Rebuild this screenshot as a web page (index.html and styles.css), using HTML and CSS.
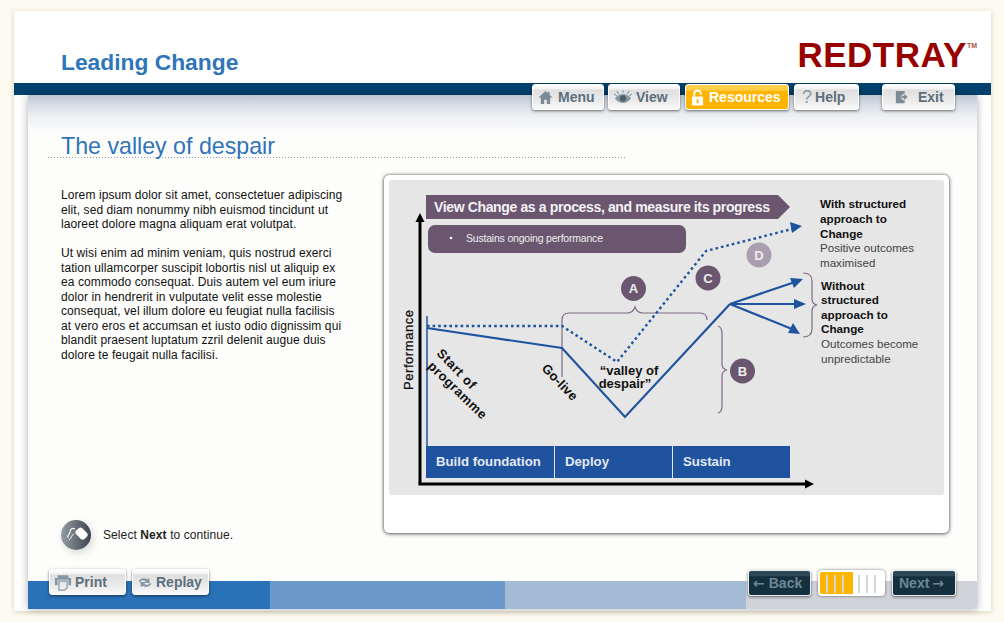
FILE: index.html
```html
<!DOCTYPE html>
<html lang="en">
<head>
<meta charset="utf-8">
<title>Leading Change</title>
<link rel="stylesheet" href="styles.css">
</head>
<body>
<div class="shell">
  <header class="top">
    <h1 class="course">Leading Change</h1>
    <div class="logo">REDTRAY<span class="tm">TM</span></div>
  </header>
  <div class="navband">
    <nav class="nav">
      <a class="btn w-menu"><svg class="ic" viewBox="0 0 16 16"><path d="M8 1 0.5 8H3v7h3.6v-4.500h2.800V15H13V8h2.500L12.500 5.200V2h-2v1.300z" fill="#7c8b96"/></svg>Menu</a>
      <a class="btn w-view"><svg class="ic ic-eye" viewBox="0 0 20 16"><path d="M1 9c3-4 6-5 9-5s6 1 9 5c-3 3.500-6 5-9 5S4 12.500 1 9z" fill="#8a98a2"/><circle cx="10" cy="9" r="3.400" fill="#4f5d68"/><path d="M3 1l2.500 3M10 0v3M17 1l-2.500 3M0 4l3 2M20 4l-3 2" stroke="#8a98a2" stroke-width="1.200"/></svg>View</a>
      <a class="btn btn-gold w-res"><svg class="ic ic-lock" viewBox="0 0 14 18"><path d="M3.500 8V5a3.500 3.500 0 0 1 7 0v1" fill="none" stroke="#fff" stroke-width="2"/><rect x="1" y="8" width="12" height="9.500" rx="1" fill="#fff"/><rect x="6" y="11" width="2" height="4" fill="#ffb400"/></svg>Resources</a>
      <a class="btn w-help"><span class="q">?</span>Help</a>
      <a class="btn w-exit"><svg class="ic ic-exit" viewBox="0 0 16 16"><path d="M1 1h10v4H8v6h3v4H1z" fill="#7c8b96"/><path d="M15 8 10 4v2.500H7v3h3V12z" fill="#7c8b96" stroke="#eee" stroke-width=".6"/></svg>Exit</a>
    </nav>
  </div>
  <main class="panel">
    <div class="titlebar"><h2 class="title">The valley of despair</h2></div>
    <div class="body">
      <section class="copy">
        <div class="paras">
          <p>Lorem ipsum dolor sit amet, consectetuer adipiscing elit, sed diam nonummy nibh euismod tincidunt ut laoreet dolore magna aliquam erat volutpat.</p>
          <p>Ut wisi enim ad minim veniam, quis nostrud exerci tation ullamcorper suscipit lobortis nisl ut aliquip ex ea commodo consequat. Duis autem vel eum iriure dolor in hendrerit in vulputate velit esse molestie consequat, vel illum dolore eu feugiat nulla facilisis at vero eros et accumsan et iusto odio dignissim qui blandit praesent luptatum zzril delenit augue duis dolore te feugait nulla facilisi.</p>
        </div>
        <div class="prompt">
          <span class="mouse"><svg viewBox="0 0 30 30" width="30" height="30"><path d="M15 10.500l3-2.500c1-.8 2-.8 3 0l5 5c1 1.200 1 2.500 0 3.600l-2.500 2.500c-1.200 1-2.400 1-3.600 0l-5-5c-.8-1-.8-2.400.1-3.600z" fill="#fff"/><path d="M7 18c-1-3 1.500-3 2-6s2-4.500 5-3" fill="none" stroke="#fff" stroke-width="1.200"/><path d="M8 20c3-2 2-5 5-6" fill="none" stroke="#fff" stroke-width="1"/></svg></span>
          <span>Select <b>Next</b> to continue.</span>
        </div>
      </section>
      <figure class="card">
        <svg class="chart" viewBox="384 175 565 358" width="565" height="358">
          <rect x="389" y="180" width="555" height="315" rx="3" class="plot"/>
          <polygon points="426,195 778,195 790,207 778,219 426,219" class="plum"/>
          <text x="434" y="212" class="t-head" textLength="336">View Change as a process, and measure its progress</text>
          <rect x="428" y="225" width="258" height="28" rx="7" class="plum"/>
          <circle cx="451" cy="238" r="1.300" fill="#fff"/>
          <text x="466" y="242" class="t-sub" textLength="137">Sustains ongoing performance</text>

          <path d="M562 377V320q0-7 7-7h58q6 0 8-6q2 6 8 6h57q7 0 7 7" class="brace"/>
          <path d="M718 326q4 1 4 8v30q0 5 5 6q-5 1-5 6v30q0 6-4 7" class="brace"/>
          <path d="M803 273q9 0 9 8v18q0 5 5 6q-5 1-5 6v18q0 8-9 8" class="brace"/>

          <path d="M427 316V446" class="line thin"/>
          <path d="M427 328 562 348 625 417 730 304" class="line"/>
          <path d="M427 326H562L617 362 706 251 792 229" class="dots"/>
          <polygon points="802,226 790,222 792,233" class="blue"/>
          <path d="M730 304 795 282M730 304H796M730 304 792 329" class="line"/>
          <polygon points="803,279 790,278 794,288" class="blue"/>
          <polygon points="806,304 794,299 794,309" class="blue"/>
          <polygon points="800,334 793,323 788,333" class="blue"/>

          <path d="M420 484V220" class="axis"/>
          <polygon points="420,213 415.500,222 424.500,222" fill="#000"/>
          <path d="M418.500 484H806" class="axis"/>
          <polygon points="814,484 805,479.500 805,488.500" fill="#000"/>

          <text x="413" y="390" transform="rotate(-90 413 390)" class="t-perf" textLength="80">Performance</text>
          <text x="436" y="354" transform="rotate(46 436 354)" class="t-rot" textLength="50">Start of</text>
          <text x="427" y="367" transform="rotate(44 427 367)" class="t-rot" textLength="76">programme</text>
          <text x="541" y="369" transform="rotate(46 541 369)" class="t-rot" textLength="45">Go-live</text>
          <text x="629" y="375" class="t-dark t-mid">“valley of</text>
          <text x="625" y="388" class="t-dark t-mid">despair”</text>

          <rect x="426" y="446" width="364" height="32" class="blue"/>
          <path d="M554.500 446V478M672.500 446V478" class="sep"/>
          <text x="436" y="466" class="t-bar">Build foundation</text>
          <text x="565" y="466" class="t-bar">Deploy</text>
          <text x="683" y="466" class="t-bar">Sustain</text>

          <circle cx="633.500" cy="288.500" r="12.500" class="plum"/><text x="633.500" y="293" class="t-badge">A</text>
          <circle cx="708" cy="278" r="12.500" class="plum"/><text x="708" y="282.500" class="t-badge">C</text>
          <circle cx="759" cy="255" r="12.500" class="plum-soft"/><text x="759" y="259.500" class="t-badge">D</text>
          <circle cx="742.500" cy="371" r="12.500" class="plum"/><text x="742.500" y="375.500" class="t-badge">B</text>

          <text class="t-b"><tspan x="820" y="208">With structured</tspan><tspan x="820" y="223">approach to</tspan><tspan x="820" y="238">Change</tspan></text>
          <text class="t-r"><tspan x="820" y="252">Positive outcomes</tspan><tspan x="820" y="267">maximised</tspan></text>
          <text class="t-b"><tspan x="821" y="290">Without</tspan><tspan x="821" y="304">structured</tspan><tspan x="821" y="319">approach to</tspan><tspan x="821" y="333">Change</tspan></text>
          <text class="t-r"><tspan x="821" y="348">Outcomes become</tspan><tspan x="821" y="363">unpredictable</tspan></text>
        </svg>
      </figure>
    </div>
    <footer class="foot">
      <span class="seg s1"></span><span class="seg s2"></span><span class="seg s3"></span><span class="seg s4"></span>
      <div class="foot-left">
        <a class="btn w-print"><svg class="ic ic-print" viewBox="0 0 20 18"><path d="M4 1h12v3h3v8h-3V6H4v6H1V4h3z" fill="#8497a3"/><path d="M5.500 7.500h9V15l-3 2.500h-6z" fill="none" stroke="#8497a3" stroke-width="1.300"/></svg>Print</a>
        <a class="btn w-replay"><svg class="ic ic-replay" viewBox="0 0 20 18"><path d="M2 8c1-4 6-6 11-3l2-2 1 7-7-1 2-2c-3-1.500-6-1-7 1z" fill="#8497a3"/><path d="M18 10c-1 4-6 6-11 3l-2 2-1-7 7 1-2 2c3 1.500 6 1 7-1z" fill="#8497a3"/></svg>Replay</a>
      </div>
      <div class="foot-right">
        <a class="btn btn-dark w-back"><span class="arr">←</span>Back</a>
        <div class="progress"><span class="fill"></span><i></i><i></i><i></i><i class="gap"></i><i></i><i></i></div>
        <a class="btn btn-dark w-next">Next<span class="arr">→</span></a>
      </div>
    </footer>
  </main>
</div>
</body>
</html>
```
FILE: styles.css
```css
* { box-sizing: border-box; }
html, body { margin: 0; height: 100%; }
body {
  background: #fdfaf0;
  font-family: "Liberation Sans", Arial, sans-serif;
  overflow: hidden;
}
.shell {
  width: 977px;
  height: 600px;
  margin: 11px 0 0 14px;
  background: #fff;
  box-shadow: 0 1px 5px rgba(170, 160, 120, .45);
  display: flex;
  flex-direction: column;
}
.top {
  height: 72px;
  flex: none;
  display: flex;
  justify-content: space-between;
  padding: 0 14px 0 47px;
}
.course {
  margin: 38px 0 0;
  font-size: 22.800px;
  line-height: 27px;
  font-weight: 700;
  color: #2e75b9;
}
.logo {
  margin-top: 24px;
  font-size: 35px;
  line-height: 39px;
  font-weight: 700;
  color: #980000;
  letter-spacing: .5px;
  display: flex;
}
.tm {
  font-size: 7px;
  line-height: 9px;
  margin-top: 6px;
  color: #a85050;
  letter-spacing: 0;
}
.navband {
  height: 12px;
  flex: none;
  background: #03426f;
  position: relative;
}
.nav {
  position: absolute;
  top: 1px;
  left: 518px;
  display: flex;
  z-index: 3;
}
.btn {
  height: 26px;
  display: flex;
  align-items: center;
  font-size: 14px;
  font-weight: 700;
  color: #5d6f7c;
  border-radius: 3px;
  border: 1px solid #fff;
  background: linear-gradient(#fff 0, #f4f4f4 14%, #dfdfdf 22%, #ececec 70%, #fafafa 100%);
  box-shadow: 0 1px 3px rgba(0, 0, 0, .55);
  flex: none;
}
.btn-gold {
  color: #fff;
  background: linear-gradient(#ffd050 0, #ffcc44 22%, #ffb400 26%, #ffb400 100%);
}
.btn-dark {
  color: #6d8797;
  border-color: #e8eef0;
  background: linear-gradient(#2d4958 0, #2d4958 20%, #14303f 24%, #14303f 100%);
}
.w-menu { width: 72px; margin-right: 4px; padding-left: 5px; gap: 5px; }
.w-view { width: 72px; margin-right: 5px; padding-left: 5px; gap: 4px; }
.w-res { width: 104px; margin-right: 5px; padding-left: 5px; gap: 5px; }
.w-help { width: 65px; margin-right: 23px; padding-left: 7px; gap: 3px; }
.w-exit { width: 73px; padding-left: 12px; gap: 9px; }
.ic { width: 15px; height: 15px; flex: none; }
.ic-eye { width: 18px; height: 15px; }
.ic-lock { width: 13px; height: 17px; }
.ic-exit { width: 14px; height: 14px; }
.ic-print { width: 18px; height: 17px; }
.ic-replay { width: 16px; height: 15px; }
.q { font-size: 18px; font-weight: 400; color: #8a98a2; line-height: 1; }
.panel {
  width: 949px;
  height: 514px;
  margin-left: 14px;
  flex: none;
  display: flex;
  flex-direction: column;
  background: linear-gradient(#bcc6d2 0, #d8dee5 10px, #eef0f3 22px, #fbfbfb 36px, #fdfdfb 44px);
  box-shadow: 0 0 8px rgba(0, 0, 0, .32);
  position: relative;
}
.titlebar { height: 63px; flex: none; }
.title {
  width: 578px;
  height: 63px;
  margin: 0 0 0 19px;
  padding: 39px 0 0 14px;
  font-size: 23.200px;
  line-height: 24px;
  font-weight: 400;
  color: #2f74b8;
  background-image: radial-gradient(circle, #9b9b9b .7px, transparent .8px);
  background-size: 3px 1px;
  background-position: 0 100%;
  background-repeat: repeat-x;
}
.body { flex: 1; display: flex; min-height: 0; }
.copy {
  width: 356px;
  flex: none;
  padding: 30px 0 31px 33px;
  display: flex;
  flex-direction: column;
  justify-content: space-between;
  font-size: 12px;
  line-height: 14.500px;
  letter-spacing: .09px;
  color: #111;
}
.paras { width: 284px; }
.paras p { margin: 0 0 14.500px; }
.prompt {
  display: flex;
  align-items: center;
  gap: 12px;
  color: #222;
}
.mouse {
  width: 30px;
  height: 30px;
  border-radius: 50%;
  background: linear-gradient(90deg, #949da4, #3c454d);
  box-shadow: 2px 3px 8px rgba(0, 0, 0, .15);
  flex: none;
}
.mouse svg { display: block; }
.card {
  width: 565px;
  height: 358px;
  margin: 17px 0 0;
  background: #fff;
  border-radius: 5px;
  box-shadow: 0 0 3px rgba(0, 0, 0, .55), 0 1px 4px rgba(0, 0, 0, .45);
  overflow: hidden;
}
.chart { display: block; }
.plot { fill: #e6e6e6; }
.plum { fill: #6b5670; }
.plum-soft { fill: #a99fb0; }
.blue { fill: #1f539f; }
.brace { fill: none; stroke: #7f6d86; stroke-width: 1.200; }
.line { fill: none; stroke: #1f539f; stroke-width: 2.200; }
.thin { stroke-width: 1.500; }
.dots { fill: none; stroke: #1f539f; stroke-width: 2.400; stroke-dasharray: 2.600 3; }
.axis { fill: none; stroke: #000; stroke-width: 3; }
.sep { stroke: #dfe6f0; stroke-width: 1; }
.chart text { font-family: "Liberation Sans", Arial, sans-serif; }
.t-head { fill: #f4f2f5; font-size: 14px; font-weight: 700; }
.t-sub { fill: #eee; font-size: 10.500px; }
.t-perf { fill: #111; font-size: 13px; stroke: #111; stroke-width: .25px; }
.t-dark { fill: #111; font-size: 13px; font-weight: 700; }
.t-rot { fill: #111; font-size: 13px; font-weight: 700; }
.t-mid { text-anchor: middle; }
.t-bar { fill: #e4e9f3; font-size: 13.200px; font-weight: 700; }
.t-badge { fill: #eee; font-size: 13px; font-weight: 700; text-anchor: middle; }
.t-b { fill: #111; font-size: 11.700px; font-weight: 700; }
.t-r { fill: #444; font-size: 11.600px; }
.foot {
  height: 28px;
  flex: none;
  display: flex;
  position: relative;
}
.seg { display: block; height: 100%; }
.s1 { width: 242px; background: #2a72b8; }
.s2 { width: 235px; background: #6b9aca; }
.s3 { width: 241px; background: #a3bbd5; }
.s4 { flex: 1; background: #d0d3da; }
.foot-left {
  position: absolute;
  left: 21px;
  top: -12px;
  display: flex;
  gap: 6px;
}
.foot-right {
  position: absolute;
  left: 720px;
  top: -11px;
  display: flex;
}
.w-print { width: 77px; padding-left: 4px; gap: 3px; }
.w-replay { width: 77px; padding-left: 4px; gap: 3px; }
.w-back { width: 63px; margin-right: 7px; padding-left: 4px; gap: 4px; }
.w-next { width: 64px; margin-left: 7px; padding-left: 6px; gap: 3px; }
.arr { font-size: 14px; font-family: "DejaVu Sans", sans-serif; font-weight: 700; line-height: 1; }
.progress {
  width: 67px;
  height: 26px;
  border: 2px solid #fff;
  border-radius: 4px;
  background: #fff;
  box-shadow: 0 0 3px rgba(0, 0, 0, .55);
  display: flex;
  gap: 6px;
  padding: 3px 0 1px 6px;
  position: relative;
  overflow: hidden;
}
.fill {
  position: absolute;
  left: 0;
  top: 0;
  bottom: 0;
  width: 33px;
  background: #ffb400;
}
.progress i {
  width: 2px;
  background: #d6d6d6;
  position: relative;
  flex: none;
}
.progress i.gap { margin-left: 8px; }
```
